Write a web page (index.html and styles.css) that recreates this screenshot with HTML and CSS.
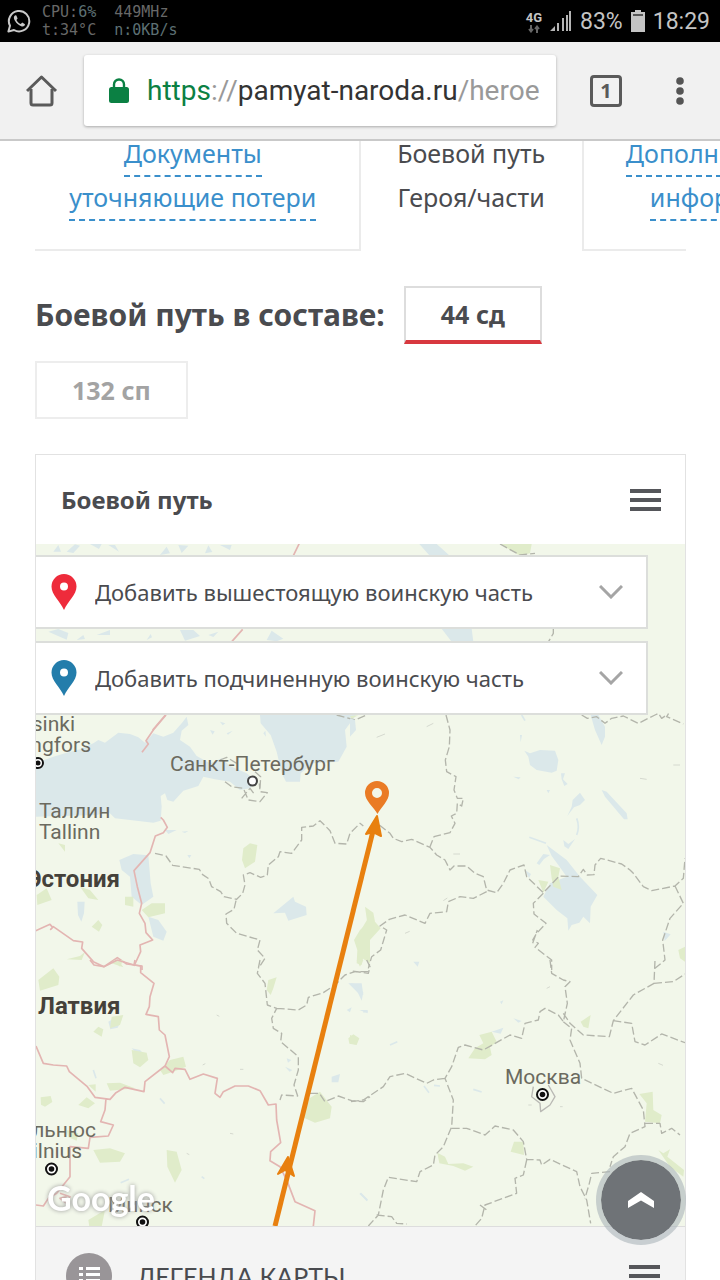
FILE: index.html
```html
<!DOCTYPE html>
<html lang="ru">
<head>
  <meta charset="UTF-8" />
  <meta name="viewport" content="width=device-width, initial-scale=1" />
  <title>Боевой путь</title>
  <link rel="stylesheet" href="styles.css">
</head>
<body>
  <div class="status-bar">
    <svg class="whatsapp" viewBox="0 0 24 24" width="24" height="24" fill="none" stroke="#c9c9c9" stroke-width="2">
      <path d="M1.4 22.6 L3 16.8 A10.2 10.2 0 1 1 7 21 Z" stroke-linejoin="round" />
      <path d="M8.2 6.2 C6.4 7.2 6.6 9.4 7.8 11.5 C9.6 14.6 12 16.7 14.8 17.4 C16.4 17.7 17.8 16.8 18 15.2 L15.2 13.6 L13.8 15 C12 14.4 10.2 12.6 9.4 10.9 L10.6 9.5 L9.4 6.4 Z" fill="#c9c9c9" stroke="none" />
    </svg>
    <div class="monitor">
      <p>CPU:<span>6%  </span>449MHz</p>
      <p>t:34°C  <span>n:0KB/s</span></p>
    </div>
    <div class="status-right">
      <div class="network">
        <span>4G</span>
        <svg viewBox="0 0 12 8" width="12" height="8" fill="none" stroke="#666" stroke-width="2">
          <path d="M3 0 V6 M1 4 L3 6.5 L5 4 M9 8 V1.5 M7 4 L9 1.5 L11 4" />
        </svg>
      </div>
      <svg viewBox="0 0 22 22" width="22" height="22" fill="#b5b5b5">
        <path d="M0 21 L5 16 V21 Z M7 13 H9 V21 H7 Z M12 8 H14 V21 H12 Z M16 5 H18 V21 H16 Z" />
        <path d="M19 1 H21 V21 H19 Z" />
      </svg>
      <span>83%</span>
      <svg viewBox="0 0 14 22" width="14" height="22" fill="#c4c4c4">
        <path d="M4 0 H10 V2 H14 V22 H0 V2 H4 Z" />
        <path d="M2 4 H12 V6 H2 Z" fill="#555" />
      </svg>
      <span>18:29</span>
    </div>
  </div>

  <header class="browser-bar">
    <button class="icon-btn home" aria-label="Home">
      <svg viewBox="0 0 32 32" width="32" height="32" fill="none" stroke="#5a5a5a" stroke-width="3" stroke-linejoin="round">
        <path d="M5 14 V28 Q5 30 7 30 H24 Q26 30 26 28 V14" />
        <path d="M1 16 L15.500 2 L30 16" />
      </svg>
    </button>
    <div class="url" role="textbox" contenteditable="true" aria-label="URL" spellcheck="false">
      <svg viewBox="0 0 20 25" width="20" height="25">
        <path d="M5 10 V6.500 A5 5 0 0 1 15 6.500 V10" fill="none" stroke="#0b8043" stroke-width="2.400" />
        <rect x="0" y="9" width="20" height="16" rx="2.500" fill="#0b8043" />
      </svg>
      <span class="address"><span class="scheme">https</span><span class="muted">://</span>pamyat-naroda.ru<span class="muted">/heroe</span></span>
    </div>
    <button class="icon-btn tab-count" aria-label="Tabs">1</button>
    <button class="icon-btn more" aria-label="More">
      <svg viewBox="0 0 8 28" width="8" height="28" fill="#555">
        <circle cx="4" cy="4" r="3.800" />
        <circle cx="4" cy="14" r="3.800" />
        <circle cx="4" cy="24" r="3.800" />
      </svg>
    </button>
  </header>

  <main class="page">
    <nav class="tabs">
      <div class="tab tab-docs"><a href="#docs">Документы<br>уточняющие потери</a></div>
      <div class="tab tab-active">Боевой путь<br>Героя/части</div>
      <div class="tab tab-info"><p><a href="#info">Дополнительная<br>информация</a></p></div>
    </nav>

    <div class="units">
      <h2>Боевой путь в составе:</h2>
      <button class="unit selected">44 сд</button>
      <button class="unit">132 сп</button>
    </div>

    <section class="card">
      <div class="card-header">
        <h3>Боевой путь</h3>
        <button class="burger" aria-label="Меню"><i></i><i></i><i></i></button>
      </div>

      <div class="map">
        <svg class="map-canvas" viewBox="0 0 649 682">
          <rect width="649" height="682" fill="#f2f7ea" />

          <!-- northern strip, between the drop-downs -->
          <g transform="translate(-36 -104) scale(.333333)">
            <path class="water" d="M160 335 l15 -20 8 20z M200 335 l25 -22 15 4 -20 22z M270 312 h35 l-8 15z M325 315 l20 0 12 20z M480 345 l20 -25 10 20z M535 315 l30 2 -20 22z M615 340 l10 -24 12 20z M660 315 h35 l-5 15z M145 575 l30 -8 30 12 -5 20z M230 600 l20 -15 5 12z M290 585 l40 -15 0 15z M440 600 l12 -18 4 10z M540 570 l40 0 20 18 -45 14z M625 585 l30 -10 -15 16z M800 600 l15 -28 35 24 -20 8z" />
            <path class="border" d="M898 310 L880 347 M728 568 L696 604 M497 824 L458 870" />
            <path class="water" d="M1258 312 H1310 L1350 348 H1290Z M1325 566 H1415 L1420 605 H1355Z" transform="translate(-718 0) translate(718 0)" />
            <path class="green" d="M1500 312 H1595 L1590 340 L1560 347 Z" />
            <path class="region" d="M1500 312 L1560 345 L1605 340 M1660 566 V580 L1646 604" />
          </g>

          <!-- Gulf of Finland, Estonia, Ladoga -->
          <g transform="translate(-6 166) scale(.333333)">
            <path class="water" d="M15 160 L70 140 L110 128 L150 118 L190 100 L205 90 L225 98 L265 68 L300 72 L325 82 L345 98 L370 70 L400 80 L430 68 L455 40 L470 20 L475 45 L455 62 L450 90 L480 110 L500 138 L540 160 L575 145 L600 168 L650 190 L678 212 L660 235 L630 240 L600 215 L555 208 L520 200 L505 228 L460 242 L430 275 L412 270 L405 250 L392 258 L395 290 L392 332 L370 338 L300 330 L255 325 L235 305 L200 315 L15 320Z" />
            <path class="water" d="M690 15 H978 L945 60 L950 110 L925 155 L850 160 L812 190 L810 215 L768 215 L755 190 L740 125 L722 75 L692 40Z" />
            <path class="water" d="M268 450 L310 432 L355 436 L362 520 L370 560 L335 585 L305 560 L300 500 L275 480Z M355 620 L385 630 L410 665 L400 692 L370 680Z M142 575 h22 l-2 35 -8 25 -10 -20z M730 610 L790 560 L795 575 L828 590 L830 615 L775 632 L765 608Z M405 360 l35 0 -25 12z M540 60 l14 4 -6 10z M700 70 l6 -8 2 18z M472 435 l12 0 -6 10z M455 365 l20 -2 -10 6z M590 70 l18 -8 -14 12z M570 35 l16 5 -8 6z" />
            <path class="green" d="M640 415 L660 400 L682 405 L675 455 L645 475 L636 450Z M335 600 L365 580 L405 580 L405 610 L355 622Z M20 555 L50 535 L65 570 L22 585Z M150 530 L180 540 L205 570 L175 565Z M285 560 h25 v30 l-25 -5z M185 650 l20 -20 12 15 -10 20z M975 690 L1005 640 L1020 615 V760 L990 740Z M110 748 l40 -10 15 -12 -10 24z M245 760 l20 -10 15 22z M85 400 l20 5 0 20z" />
            <path class="border" d="M408 15 L370 60 L348 92 L355 102 L336 127 M392 322 L400 330 L412 352 L400 368 L376 378 L360 428 L312 482 L322 530 L335 580 L328 610 L345 640 L348 668 L368 690 L330 705 L332 725 L312 768 M15 663 L60 643 L68 652 L62 658 L70 650 L130 692 L158 696 L155 715 L190 755 L222 770 L262 743 L290 762 L336 768 V780" />
            <path class="region" d="M375 430 L408 438 L428 466 L508 478 L518 494 L536 506 L545 530 L572 545 L582 560 L620 568 L638 550 L645 525 L640 495 L660 488 L692 502 L712 495 L715 465 L745 440 L750 425 L785 430 L815 390 V352 L850 348 L870 332 L900 362 L915 400 L950 402 L960 370 L990 340 L1000 348 M618 572 L612 598 L588 612 L590 640 L620 670 L690 690 L682 720 L705 745 L685 775 M585 215 L605 230 L640 235 L655 270 L690 275 L712 248 L690 245 L688 220 M635 265 L660 235 L675 255 M570 150 L590 142 L620 160 M920 15 L975 30 L1010 15 M675 185 L692 200 L690 235" />
          </g>

          <!-- Beloye lake, Rybinsk reservoir, Yaroslavl -->
          <g transform="translate(314 166) scale(.333333)">
            <path class="water" d="M523 122 L540 130 L570 120 L615 122 L625 150 L620 182 L605 188 L560 180 L540 165 L535 140Z M722 15 H745 L765 50 V80 L755 105 L735 60Z M755 240 L770 245 L830 310 L833 328 L822 328 L765 260Z M668 270 L690 248 L705 270 L690 285 L672 292 L652 318 L665 290Z M590 405 L650 450 L690 500 L742 555 L722 590 L720 640 L700 620 L688 638 L665 645 L655 662 L652 625 L620 600 L580 560 L600 520 L650 500 L625 465 L605 438Z M560 460 l20 -28 20 3 -18 12 -14 18z M0 25 L15 30 18 60 0 80z M510 75 l6 0 -4 22z M633 190 l12 0 -6 18 14 14 -10 6 -8 -20z M490 200 l22 2 -6 6z M590 240 l10 0 -5 10z M640 390 l15 12 20 -15 -20 30 -12 -8z M940 665 l22 8 -18 20z M525 480 l18 12 -6 12z" />
            <path class="waterline" d="M680 325 Q690 350 680 375 M515 15 L525 32 M538 382 L588 400" />
            <path class="green" d="M45 590 L70 608 L75 635 L92 655 L60 690 L45 720 L35 765 L20 760 L22 720 L12 690 L30 660 L52 640Z M600 465 L630 475 L625 500 L635 540 L610 530 L605 505Z M565 510 L595 515 L580 548Z M985 720 l20 -10 v45 l-15 -10z M0 18 l25 -2 -20 10z" />
            <path class="region" d="M288 15 L300 60 L298 110 L286 150 L290 185 L318 200 L312 240 L322 265 H340 L335 288 L322 280 L320 310 L304 318 L315 340 L300 368 L252 380 L240 410 M88 345 L120 370 L130 385 L155 395 L185 388 L240 412 L260 435 L285 450 L300 480 L312 468 L350 468 L375 490 L400 500 L410 540 L440 548 L460 520 L480 480 L522 465 L530 500 L580 548 L628 498 L685 500 L700 478 L712 495 L732 494 L735 465 L752 445 L815 462 L840 480 L850 490 L880 530 L905 542 L975 528 L1000 505 L1005 445 M975 528 L1000 580 L960 625 L938 690 L945 750 L915 775 M410 545 L370 565 L330 560 L295 575 L290 605 L240 610 L225 640 L165 615 L118 628 L90 648 L110 660 L92 720 L65 740 L55 775 M580 550 L550 580 L552 612 L588 640 L560 670 L548 690 L565 700 L555 712 L605 750 V780 M548 700 L562 660 M695 15 L712 25 L740 20 L765 40 L785 25 L820 18 L865 40 L915 15 L925 10 L935 25 L955 12 L950 20 L1000 42" />
            <path class="faint" d="M80 82 l25 -10 M230 50 l20 -10 M870 205 l20 3 M970 165 h20 M310 432 h20 M165 670 l14 -6 M280 572 l12 -8" />
          </g>

          <!-- Latvia, Lithuania, Belarus -->
          <g transform="translate(-6 416) scale(.333333)">
            <path class="water" d="M235 185 l20 -12 20 5 -12 25 -22 5z M305 265 l25 5 20 20 -25 -4z M955 70 h40 l5 35 -15 -5z M905 350 l25 -8 -5 25 -20 0z M765 320 l22 10 -8 5z M950 150 l15 -8 -5 15z M1000 150 l15 5 -15 3z M770 295 l14 5 -10 8z" />
            <path class="waterline" d="M272 668 l25 -10 M515 650 l8 6 M990 700 l22 20 M190 330 l8 25 M390 415 l14 16" />
            <path class="green" d="M25 60 L70 25 L88 50 L85 75 L30 92Z M245 170 L280 165 L270 195 L240 205Z M190 215 l15 -15 15 8 -5 22z M305 270 L350 278 L355 300 L330 322 L310 310Z M390 330 L420 300 L460 290 L468 320 L430 335 L400 345Z M230 370 L270 368 L315 385 L240 392Z M32 412 l30 -4 5 18 -22 14 -12 -6z M145 435 L170 412 L195 430 L175 445Z M190 570 L240 565 L285 580 L270 605 L210 608Z M410 570 L440 575 L455 630 L435 668 L412 620Z M175 780 L225 750 L215 800 H178Z M830 420 L870 395 L905 440 L900 475 L855 488 L815 470Z M955 235 l15 -12 18 12 -8 20 -22 -4z M715 60 L740 52 L730 85 L722 105 L710 90Z M250 0 h30 l-10 20z M175 375 l22 -2 0 22z M110 510 l35 10 -5 22 -25 -10z" />
            <path class="border" d="M180 0 L192 15 L222 20 L262 0 L312 15 L332 18 V38 L372 70 L360 110 L358 140 L348 163 L385 170 L388 210 L405 225 L418 290 L405 318 L345 365 L342 395 L285 382 L258 398 L240 418 L195 412 L172 380 L118 335 L110 318 L70 315 L40 310 L18 258 M405 318 L428 338 L435 325 L465 328 L480 358 L520 342 L562 355 L555 400 L570 412 L580 395 L615 378 L655 378 L690 392 L715 435 L738 432 L740 480 L752 548 L722 575 L720 602 L750 620 L772 665 L795 725 L855 752 L850 798 M228 415 L225 450 L212 485 L250 495 L235 528 L180 532 L175 565 L120 560 V650 L80 700 L55 715 L40 738 L18 735 M312 15 L315 0 M90 700 l30 10 -10 20 -20 -15 20 -5" />
            <path class="region" d="M690 0 L682 40 L705 70 L712 135 L740 145 L725 175 L730 205 L755 220 L752 245 L805 290 V330 L792 375 L803 408 L755 405 L750 420 M740 145 L805 150 L830 135 L835 112 L880 98 L915 75 L945 45 L975 35 H1020 M840 400 L868 400 L885 425 L925 408 L965 422 L1000 425 L1020 410" />
            <path class="faint" d="M518 315 l8 -4 M560 165 l8 4 M600 520 l10 2 M470 580 l8 4 M630 328 l10 0" />
          </g>

          <!-- Moscow and around -->
          <g transform="translate(314 416) scale(.333333)">
            <path class="water" d="M0 70 l15 2 25 25 -5 25 -12 -25z M190 5 h18 l-5 15z M425 215 l35 -12 -8 18z M490 175 l25 8 -10 5z M28 150 l25 0 0 10z M450 125 l10 -4 -5 12z" />
            <path class="waterline" d="M222 378 l15 20 M370 388 l25 8 M32 700 l20 22 M252 376 l18 2 M120 255 l22 -10" />
            <path class="green" d="M388 225 L425 215 L440 245 L420 262 L425 285 L405 298 L355 295 L375 265 L400 250Z M692 185 L722 165 L715 205 L700 200Z M868 402 L908 395 L910 450 L935 465 L930 490 L885 485 L890 430Z M482 575 L492 545 L520 545 L522 585Z M262 578 L285 590 L295 612 L340 610 L370 620 L345 632 L310 618 L268 610Z M925 570 l15 10 20 -12 -8 22 50 40 -2 20 -40 -30z M0 225 l22 8 -5 20 -17 -2z M20 0 h20 l-10 20z" />
            <path class="region" d="M600 0 L605 40 L640 60 L660 65 L645 80 L652 130 L640 185 L625 165 L585 145 L570 155 L565 180 L525 190 L515 235 L480 225 L400 270 L345 255 L325 262 L305 320 L285 355 L310 420 L305 500 L280 560 L255 585 L250 615 L210 635 L200 665 L115 652 L100 690 L85 765 L55 798 M285 355 L250 360 L230 370 L165 340 L120 350 L100 380 L40 420 L0 425 M640 185 L665 205 L660 240 L690 310 L695 355 L790 400 L845 385 L880 450 L885 500 L840 520 L825 560 L790 590 L780 620 M640 160 L660 190 L700 225 L778 230 L790 182 L850 105 L912 70 L915 0 M790 182 L845 190 L855 245 L885 255 L935 222 L1005 248 M912 70 L970 65 L1005 42 M305 505 L350 505 L405 525 L435 498 L490 510 L520 545 L530 598 L570 600 L575 615 L600 598 L680 635 L690 680 L710 720 L722 790 M530 600 L520 645 L495 655 L500 700 L405 735 L395 775 L375 798 M885 490 L930 490 L935 520 L965 505 L990 525 M780 635 L725 640 L718 670 L705 715 M80 765 L125 770 L140 790 L170 792 M50 0 L60 20 L55 40 L0 32 M390 735 l20 15" />
            <path class="ring-road" d="M550 380 L545 410 L570 430 L572 455 L600 435 L615 410 L595 375" />
            <path class="faint" d="M535 435 l10 0 M925 310 l14 6 M630 440 h8 M590 85 l10 -5" />
          </g>

          <!-- route of the division -->
          <path d="M239 682 L339 279" fill="none" stroke="#e8800f" stroke-width="5" />
          <path d="M341 272 L330 290 L337 288 L345 292Z M252 613 L242 630 L249 626 L258 632Z" fill="#e8800f" stroke="#e8800f" stroke-width="2" stroke-linejoin="round" />
          <path fill-rule="evenodd" d="M341 237 A12 12 0 0 1 353 249 C353 257 345 263 341.500 270 C338 263 329 257 329 249 A12 12 0 0 1 341 237Z M341 244 A5 5 0 1 0 341 254 A5 5 0 1 0 341 244Z" fill="#ea7b25" />

          <g class="labels">
            <text class="end" x="39" y="187">Helsinki</text>
            <text class="end" x="55" y="208">Helsingfors</text>
            <text x="134" y="227">Санкт-Петербург</text>
            <text x="3" y="274">Таллин</text>
            <text x="3" y="295">Tallinn</text>
            <text x="469" y="540">Москва</text>
            <text class="end" x="60" y="593">Вильнюс</text>
            <text class="end" x="46" y="614">Vilnius</text>
            <text x="72" y="668">Минск</text>
            <text class="country end" x="84" y="343">Эстония</text>
            <text class="country" x="2" y="470">Латвия</text>
          </g>

          <g fill="#fff" stroke="#111" stroke-width="2">
            <circle cx="2" cy="219" r="5" />
            <circle cx="216.500" cy="237" r="4.500" stroke="#444" />
            <circle cx="506.500" cy="550.500" r="5.500" />
            <circle cx="15.500" cy="625" r="5.500" />
            <circle cx="106.500" cy="678" r="5.500" />
          </g>
          <g fill="#111">
            <circle cx="2" cy="219" r="2.500" />
            <circle cx="506.500" cy="550.500" r="2.800" />
            <circle cx="15.500" cy="625" r="2.800" />
            <circle cx="106.500" cy="678" r="2.800" />
          </g>
          <text class="google" x="11" y="667">Google</text>
        </svg>

        <div class="filters">
          <div class="filter">
            <label for="upper" aria-label="Вышестоящая часть">
              <svg viewBox="0 0 26 36" width="26" height="36"><path fill="#ee2b3b" fill-rule="evenodd" d="M13 0 A12.500 12.500 0 0 1 25.500 12.500 C25.500 21 17 27 13 36 C9 27 .5 21 .5 12.500 A12.500 12.500 0 0 1 13 0Z M13 8.500 A4 4 0 1 0 13 16.500 A4 4 0 1 0 13 8.500Z" /></svg>
            </label>
            <select id="upper"><option>Добавить вышестоящую воинскую часть</option></select>
            <svg class="chevron" viewBox="0 0 24 14" width="24" height="14"><path d="M1 1 L12 12 L23 1" /></svg>
          </div>
          <div class="filter">
            <label for="lower" aria-label="Подчиненная часть">
              <svg viewBox="0 0 26 36" width="26" height="36"><path fill="#237dab" fill-rule="evenodd" d="M13 0 A12.500 12.500 0 0 1 25.500 12.500 C25.500 21 17 27 13 36 C9 27 .5 21 .5 12.500 A12.500 12.500 0 0 1 13 0Z M13 8.500 A4 4 0 1 0 13 16.500 A4 4 0 1 0 13 8.500Z" /></svg>
            </label>
            <select id="lower"><option>Добавить подчиненную воинскую часть</option></select>
            <svg class="chevron" viewBox="0 0 24 14" width="24" height="14"><path d="M1 1 L12 12 L23 1" /></svg>
          </div>
        </div>
      </div>

      <div class="legend">
        <svg viewBox="0 0 46 46" width="46" height="46">
          <circle cx="23" cy="23" r="23" fill="#999598" />
          <path fill="#fff" d="M13 14 h4 v3 h-4z M20 14 h14 v3 h-14z M13 20 h4 v3 h-4z M20 20 h14 v3 h-14z M13 26 h4 v3 h-4z M20 26 h14 v3 h-14z" />
        </svg>
        <span>ЛЕГЕНДА КАРТЫ</span>
        <button class="burger" aria-label="Легенда"><i></i><i></i><i></i></button>
      </div>
    </section>
  </main>

  <button class="to-top" aria-label="Наверх">
    <svg viewBox="0 0 28 18" width="28" height="18"><path d="M1 10 L14 1 L27 10 V17 L14 9.500 L1 17Z" fill="#fff" /></svg>
  </button>
</body>
</html>
```
FILE: styles.css
```css
* {
  margin: 0;
  padding: 0;
  box-sizing: border-box;
}

body {
  display: flex;
  flex-direction: column;
  height: 100vh;
  overflow: hidden;
  background: #fff;
  color: #4a4b4f;
  font-family: "Noto Sans", "Open Sans", sans-serif;
}

button, select {
  font-family: inherit;
  color: inherit;
  background: none;
  border: none;
  cursor: pointer;
}

a {
  color: #3a8fcb;
  text-decoration: none;
}

svg {
  display: block;
  flex-shrink: 0;
}

/* phone status bar */
.status-bar {
  display: flex;
  align-items: center;
  flex-shrink: 0;
  height: 42px;
  padding: 0 10px 0 7px;
  background: #000;
  color: #c4c4c4;
  font-family: Roboto, sans-serif;
  font-size: 23px;
}

.monitor {
  margin-left: 11px;
  color: #686868;
  font-family: "DejaVu Sans Mono", monospace;
  font-size: 15px;
  line-height: 18px;
}

.monitor p {
  white-space: pre;
}

.monitor span {
  color: #5d7074;
}

.status-right {
  display: flex;
  align-items: center;
  gap: 8px;
  margin-left: auto;
}

.network {
  display: flex;
  flex-direction: column;
  align-items: center;
  font-size: 13px;
  font-weight: bold;
  line-height: 15px;
}

/* browser bar */
.browser-bar {
  display: flex;
  align-items: center;
  flex-shrink: 0;
  height: 99px;
  padding: 0 36px 0 26px;
  background: #f1f1f1;
  border-bottom: 2px solid #c9c9c9;
  position: relative;
  z-index: 2;
}

.url {
  display: flex;
  align-items: center;
  flex: 1;
  gap: 18px;
  height: 71px;
  margin: 0 34px 0 26px;
  padding: 0 12px 0 25px;
  background: #fff;
  border-radius: 3px;
  box-shadow: 0 1px 3px rgba(0, 0, 0, 0.3);
  color: #333;
  font-family: Roboto, sans-serif;
  font-size: 28px;
  white-space: nowrap;
  overflow: hidden;
}

.scheme {
  color: #0b8043;
}

.muted {
  color: #999;
}

.tab-count {
  width: 32px;
  height: 32px;
  border: 3px solid #5a5a5a;
  border-radius: 4px;
  color: #5a5a5a;
  font-size: 20px;
  font-weight: bold;
  line-height: 26px;
}

.more {
  margin-left: 54px;
}

/* page */
.page {
  padding: 0 34px 0 35px;
}

.tabs {
  display: flex;
  margin-top: -10px;
  font-size: 25px;
  line-height: 44px;
  text-align: center;
}

.tab {
  padding-bottom: 30px;
  border-bottom: 2px solid #ebebeb;
  white-space: nowrap;
}

.tab a {
  padding-bottom: 5px;
  border-bottom: 2px dashed #3a8fcb;
}

.tab-docs {
  flex: 0 0 50%;
  padding-right: 8px;
  border-right: 2px solid #ebebeb;
}

.tab-active {
  flex: 0 0 34%;
  border-color: transparent;
}

.tab-info {
  flex: 1;
  min-width: 0;
  padding-left: 42px;
  border-left: 2px solid #ebebeb;
}

.tab-info p {
  width: max-content;
}

.units {
  display: flex;
  flex-wrap: wrap;
  align-items: center;
  gap: 17px 19px;
  margin: 35px 0;
}

.units h2 {
  font-size: 30px;
  line-height: 44px;
}

.unit {
  height: 58px;
  padding: 0 35px;
  border: 2px solid #ededed;
  color: #a3a3a3;
  font-size: 25px;
  font-weight: bold;
}

.unit.selected {
  border-color: #ddd;
  border-bottom: 4px solid #d8383f;
  color: #4a4b4f;
}

.card {
  border: 1px solid #e2e2e2;
}

.card-header {
  display: flex;
  align-items: center;
  justify-content: space-between;
  height: 89px;
  padding: 0 24px 0 25px;
}

.card-header h3 {
  font-size: 24px;
}

.burger {
  display: flex;
  flex-direction: column;
  gap: 5px;
  width: 31px;
}

.burger i {
  height: 4px;
  background: #55565a;
}

/* map */
.map {
  position: relative;
}

.map-canvas {
  width: 100%;
  height: auto;
}

.water {
  fill: #dbe8ea;
}

.green {
  fill: #e0ecca;
}

.border, .region, .faint, .waterline, .ring-road {
  fill: none;
  stroke-width: 5;
  stroke: #e3b5b2;
  stroke-linejoin: round;
}

.region {
  stroke: #b3b5ab;
  stroke-dasharray: 24 9;
  stroke-width: 4;
}

.faint {
  stroke: #d5d9cf;
  stroke-width: 3;
}

.ring-road {
  stroke: #b9b9b4;
  stroke-width: 4;
}

.waterline {
  stroke: #dbe8ea;
}

.labels {
  fill: #6b6a5f;
  font-family: Roboto, sans-serif;
  font-size: 21px;
}

.labels .end {
  text-anchor: end;
}

.labels .country {
  fill: #45413a;
  font-size: 24px;
  font-weight: bold;
}

.google {
  fill: #fff;
  font-family: Lato, sans-serif;
  font-size: 34px;
  font-weight: bold;
  filter: drop-shadow(0 0 2px #999);
}

.filters {
  position: absolute;
  top: 11px;
  left: 0;
  right: 37px;
  display: flex;
  flex-direction: column;
  gap: 12px;
}

.filter {
  display: flex;
  align-items: center;
  height: 74px;
  padding: 0 23px 0 15px;
  background: #fff;
  border: 2px solid #dcdedb;
  border-left: none;
}

.filter select {
  flex: 1;
  min-width: 0;
  height: 100%;
  padding-left: 18px;
  appearance: none;
  font-size: 22px;
}

.chevron path {
  fill: none;
  stroke: #a5a5a5;
  stroke-width: 3;
}

.legend {
  display: flex;
  align-items: center;
  height: 98px;
  padding: 0 25px 0 30px;
  background: #f4f4f4;
  border-top: 1px solid #ddd;
  font-family: Lato, "Noto Sans", sans-serif;
  font-size: 25px;
}

.legend span {
  flex: 1;
  padding-left: 25px;
}

.to-top {
  position: fixed;
  right: 34px;
  bottom: 35px;
  display: flex;
  align-items: center;
  justify-content: center;
  width: 90px;
  height: 90px;
  border: 5px solid rgba(170, 180, 185, 0.6);
  border-radius: 50%;
  background: #6f7377;
  background-clip: padding-box;
}
```
